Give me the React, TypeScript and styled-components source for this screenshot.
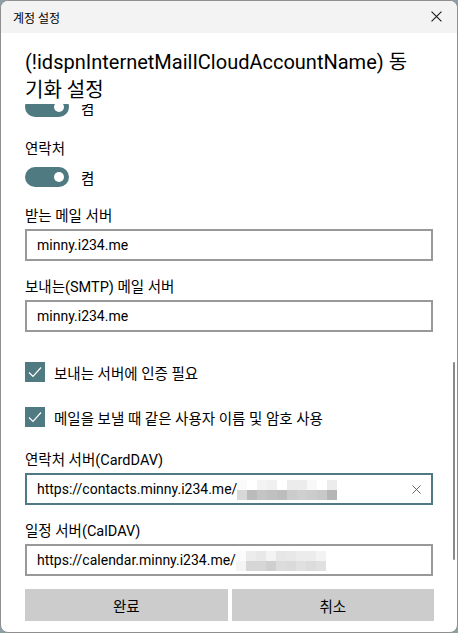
import React from 'react';
import styled, {createGlobalStyle} from 'styled-components';

const ACCENT = '#4f7a81';
const FONT = '"Segoe UI", Roboto, "Noto Sans CJK KR", sans-serif';

const GlobalStyle = createGlobalStyle`
    html, body {
        margin: 0;
        padding: 0;
        background: #8c9fa4;
    }
    body {
        font-family: ${FONT};
        color: #000;
    }
`;

const Window = styled.div`
    box-sizing: border-box;
    width: 458px;
    height: 633px;
    display: flex;
    flex-direction: column;
    background: #fff;
    border: 1px solid #8e8e8e;
    border-radius: 8px;
    overflow: hidden;
`;

const TitleBar = styled.div`
    height: 32px;
    flex: none;
    display: flex;
    align-items: center;
    justify-content: space-between;
    padding: 0 14px 0 12px;
    background: #f3f3f3;
    font-size: 12px;
`;

const CloseButton = styled.button`
    border: none;
    background: none;
    padding: 0;
    width: 12px;
    height: 12px;
    display: flex;
`;

const Header = styled.div`
    flex: none;
    padding: 15px 24px 0;
    font-size: 20px;
    line-height: 28px;
    position: relative;
    z-index: 1;
    background: #fff;
`;

const ScrollArea = styled.div`
    flex: 1;
    position: relative;
    overflow: hidden;
`;

const ScrollContent = styled.div`
    display: flex;
    flex-direction: column;
    padding: 0 24px;
    margin-top: -7px;
`;

const Thumb = styled.div`
    position: absolute;
    right: 2px;
    top: 258px;
    width: 2px;
    height: 198px;
    border-radius: 1px;
    background: #8a8a8a;
`;

const Label = styled.div<{$gap?: number}>`
    font-size: 14.5px;
    line-height: 20px;
    margin-top: ${p => p.$gap ?? 0}px;
`;

const ToggleRow = styled.div<{$gap?: number}>`
    display: flex;
    align-items: center;
    gap: 12px;
    height: 20px;
    margin-top: ${p => p.$gap ?? 0}px;
    font-size: 14.5px;
`;

const Toggle = styled.span`
    box-sizing: border-box;
    width: 44px;
    height: 20px;
    border-radius: 10px;
    background: ${ACCENT};
    display: flex;
    align-items: center;
    justify-content: flex-end;
    padding-right: 5px;
    &::after {
        content: '';
        width: 10px;
        height: 10px;
        border-radius: 50%;
        background: #fff;
    }
`;

const Field = styled.div<{$focused?: boolean}>`
    box-sizing: border-box;
    height: 32px;
    margin-top: 2px;
    display: flex;
    align-items: center;
    padding: 0 10px;
    border: 2px solid ${p => (p.$focused ? ACCENT : '#999')};
    font-size: 14px;
    white-space: nowrap;
`;

const FieldText = styled.span`
    flex: 1;
    display: flex;
    align-items: center;
`;

const Mosaic = styled.span`
    display: inline-grid;
    grid-auto-rows: 10px;
    margin-top: 1px;
`;

const MosaicRow = styled.span`
    display: flex;
`;

const Cell = styled.span<{$c: string}>`
    width: 10px;
    height: 10px;
    background: ${p => p.$c};
`;

const CheckRow = styled.div<{$gap?: number}>`
    display: flex;
    align-items: center;
    gap: 9px;
    height: 20px;
    margin-top: ${p => p.$gap ?? 0}px;
    font-size: 14.5px;
`;

const CheckBox = styled.span`
    width: 20px;
    height: 20px;
    background: ${ACCENT};
    display: flex;
    align-items: center;
    justify-content: center;
`;

const Footer = styled.div`
    flex: none;
    display: grid;
    grid-template-columns: 1fr 1fr;
    gap: 4px;
    padding: 7px 23px 11px 24px;
`;

const Button = styled.button`
    height: 32px;
    border: none;
    background: #cccccc;
    font-family: ${FONT};
    font-size: 14.5px;
    color: #000;
`;

const contactsMosaic = [
    ['#fafafa', '#ffffff', '#f3f3f3', '#f0f0f0', '#ffffff', '#ececec', '#ececec', '#f8f8f8', '#ffffff', '#ececec'],
    ['#d8d8d8', '#bbbbbb', '#c4c4c4', '#c0c0c0', '#bdbdbd', '#cbcbcb', '#cfcfcf', '#cccccc', '#c8c8c8', '#b5b5b5'],
];

const calendarMosaic = [
    ['#fbfbfb', '#ececec', '#e8e8e8', '#f3f3f3', '#e6e6e6', '#e8e8e8', '#ececec', '#ececec', '#f3f3f3'],
    ['#f4f4f4', '#d6d6d6', '#d6d6d6', '#cfcfcf', '#dcdcdc', '#dadada', '#e0e0e0', '#dcdcdc', '#e0e0e0'],
];

function Pixelated({rows}: {rows: string[][]}) {
    return (
        <Mosaic>
            {rows.map((row, i) => (
                <MosaicRow key={i}>
                    {row.map((c, j) => <Cell key={j} $c={c}/>)}
                </MosaicRow>
            ))}
        </Mosaic>
    );
}

const Cross = ({size, color}: {size: number; color: string}) => (
    <svg width={size} height={size} viewBox='0 0 10 10'>
        <path d='M0.5 0.5 L9.5 9.5 M9.5 0.5 L0.5 9.5' stroke={color} strokeWidth='1'/>
    </svg>
);

const Check = () => (
    <svg width='14' height='12' viewBox='0 0 14 12'>
        <path d='M1 6.5 L5 10.5 L13 1.5' stroke='#fff' strokeWidth='1.2' fill='none'/>
    </svg>
);

export default function App() {
    return (
        <>
            <GlobalStyle/>
            <Window>
                <TitleBar>
                    <span>{'계정 설정'}</span>
                    <CloseButton aria-label='닫기'>
                        <Cross size={11} color='#1a1a1a'/>
                    </CloseButton>
                </TitleBar>
                <Header>
                    {'(!idspnInternetMailICloudAccountName) 동'}
                    <br/>
                    {'기화 설정'}
                </Header>
                <ScrollArea>
                    <ScrollContent>
                        <ToggleRow>
                            <Toggle/>
                            {'켬'}
                        </ToggleRow>
                        <Label $gap={23}>{'연락처'}</Label>
                        <ToggleRow $gap={7}>
                            <Toggle/>
                            {'켬'}
                        </ToggleRow>
                        <Label $gap={20}>{'받는 메일 서버'}</Label>
                        <Field>{'minny.i234.me'}</Field>
                        <Label $gap={17}>{'보내는(SMTP) 메일 서버'}</Label>
                        <Field>{'minny.i234.me'}</Field>
                        <CheckRow $gap={30}>
                            <CheckBox><Check/></CheckBox>
                            {'보내는 서버에 인증 필요'}
                        </CheckRow>
                        <CheckRow $gap={25}>
                            <CheckBox><Check/></CheckBox>
                            {'메일을 보낼 때 같은 사용자 이름 및 암호 사용'}
                        </CheckRow>
                        <Label $gap={24}>{'연락처 서버(CardDAV)'}</Label>
                        <Field $focused>
                            <FieldText>
                                {'https://contacts.minny.i234.me/'}
                                <Pixelated rows={contactsMosaic}/>
                            </FieldText>
                            <Cross size={9} color='#555'/>
                        </Field>
                        <Label $gap={17}>{'일정 서버(CalDAV)'}</Label>
                        <Field>
                            <FieldText>
                                {'https://calendar.minny.i234.me/'}
                                <Pixelated rows={calendarMosaic}/>
                            </FieldText>
                        </Field>
                    </ScrollContent>
                    <Thumb/>
                </ScrollArea>
                <Footer>
                    <Button>{'완료'}</Button>
                    <Button>{'취소'}</Button>
                </Footer>
            </Window>
        </>
    );
}
